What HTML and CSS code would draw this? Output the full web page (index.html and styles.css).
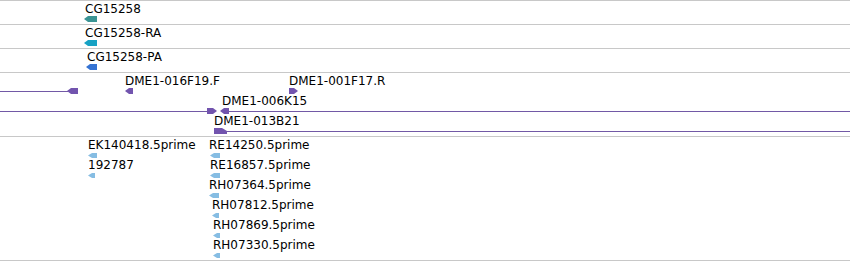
FILE: index.html
```html
<!DOCTYPE html>
<html>
<head>
<meta charset="utf-8">
<link rel="stylesheet" href="styles.css">
</head>
<body>
<div class="panel">
  <div class="track track-s">
    <span class="label" style="left:85px;top:1px">CG15258</span>
    <svg class="glyph" style="left:84px;top:15px" width="13" height="6"><polygon class="g-teal" points="0,3 4,0 13,0 13,6 4,6"/></svg>
  </div>
  <div class="track track-s">
    <span class="label" style="left:85px;top:1px">CG15258-RA</span>
    <svg class="glyph" style="left:84px;top:15px" width="13" height="6"><polygon class="g-cyan" points="0,3 4,0 13,0 13,6 4,6"/></svg>
  </div>
  <div class="track track-s">
    <span class="label" style="left:87px;top:1px">CG15258-PA</span>
    <svg class="glyph" style="left:86px;top:15px" width="11" height="6"><polygon class="g-blue" points="0,3 4,0 11,0 11,6 4,6"/></svg>
  </div>
  <div class="track track-m">
    <div class="line" style="left:0;top:18px;width:68px"></div>
    <svg class="glyph" style="left:67px;top:15px" width="11" height="6"><polygon class="g-purple" points="0,3 4,0 11,0 11,6 4,6"/></svg>
    <span class="label" style="left:125px;top:1px">DME1-016F19.F</span>
    <svg class="glyph" style="left:125px;top:15px" width="8" height="6"><polygon class="g-purple" points="0,3 4,0 8,0 8,6 4,6"/></svg>
    <span class="label" style="left:289px;top:1px">DME1-001F17.R</span>
    <svg class="glyph" style="left:289px;top:15px" width="9" height="6"><polygon class="g-purple" points="0,0 5,0 9,3 5,6 0,6"/></svg>

    <span class="label" style="left:222px;top:21px">DME1-006K15</span>
    <div class="line" style="left:0;top:38px;width:208px"></div>
    <svg class="glyph" style="left:207px;top:35px" width="10" height="6"><polygon class="g-purple" points="0,0 6,0 10,3 6,6 0,6"/></svg>
    <svg class="glyph" style="left:220px;top:35px" width="9" height="6"><polygon class="g-purple" points="0,3 4,0 9,0 9,6 4,6"/></svg>
    <div class="line" style="left:228px;top:38px;width:622px"></div>

    <span class="label" style="left:214px;top:41px">DME1-013B21</span>
    <svg class="glyph" style="left:214px;top:55px" width="13" height="6"><polygon class="g-purple" points="0,0 8,0 13,3 13,6 0,6"/></svg>
    <div class="line" style="left:226px;top:58px;width:624px"></div>
  </div>
  <div class="track track-l">
    <span class="label" style="left:88px;top:1px">EK140418.5prime</span>
    <svg class="glyph" style="left:88px;top:16px" width="9" height="5"><polygon class="g-light" points="0,2.5 4,0 9,0 9,5 4,5"/></svg>
    <span class="label" style="left:88px;top:21px">192787</span>
    <svg class="glyph" style="left:88px;top:36px" width="7" height="5"><polygon class="g-light" points="0,2.5 4,0 7,0 7,5 4,5"/></svg>

    <span class="label" style="left:209px;top:1px">RE14250.5prime</span>
    <svg class="glyph" style="left:210px;top:16px" width="10" height="5"><polygon class="g-light" points="0,2.5 4,0 10,0 10,5 4,5"/></svg>
    <span class="label" style="left:210px;top:21px">RE16857.5prime</span>
    <svg class="glyph" style="left:210px;top:36px" width="10" height="5"><polygon class="g-light" points="0,2.5 4,0 10,0 10,5 4,5"/></svg>
    <span class="label" style="left:209px;top:41px">RH07364.5prime</span>
    <svg class="glyph" style="left:209px;top:56px" width="10" height="5"><polygon class="g-light" points="0,2.5 4,0 10,0 10,5 4,5"/></svg>
    <span class="label" style="left:212px;top:61px">RH07812.5prime</span>
    <svg class="glyph" style="left:212px;top:76px" width="7" height="5"><polygon class="g-light" points="0,2.5 4,0 7,0 7,5 4,5"/></svg>
    <span class="label" style="left:213px;top:81px">RH07869.5prime</span>
    <svg class="glyph" style="left:213px;top:96px" width="7" height="5"><polygon class="g-light" points="0,2.5 4,0 7,0 7,5 4,5"/></svg>
    <span class="label" style="left:213px;top:101px">RH07330.5prime</span>
    <svg class="glyph" style="left:213px;top:116px" width="7" height="5"><polygon class="g-light" points="0,2.5 4,0 7,0 7,5 4,5"/></svg>
  </div>
</div>
</body>
</html>
```

FILE: styles.css
```css
html, body {
  margin: 0;
  padding: 0;
  background: #ffffff;
}

.panel {
  width: 850px;
  border-top: 1px solid #c8c8c8;
  display: flex;
  flex-direction: column;
  font-family: "DejaVu Sans", "Liberation Sans", sans-serif;
  font-size: 12px;
  line-height: 14px;
  color: #000;
}

.track {
  position: relative;
  border-bottom: 1px solid #c8c8c8;
  overflow: hidden;
}

.track-s { height: 23px; }
.track-m { height: 63px; }
.track-l { height: 123px; }

.label {
  position: absolute;
  white-space: nowrap;
}

.glyph {
  position: absolute;
  display: block;
}

.line {
  position: absolute;
  height: 1px;
  background: #7259a6;
}

.g-teal { fill: #3a9494; }
.g-cyan { fill: #17a2c4; }
.g-blue { fill: #3573d3; }
.g-purple { fill: #7254ae; }
.g-light { fill: #86bde3; }
```
